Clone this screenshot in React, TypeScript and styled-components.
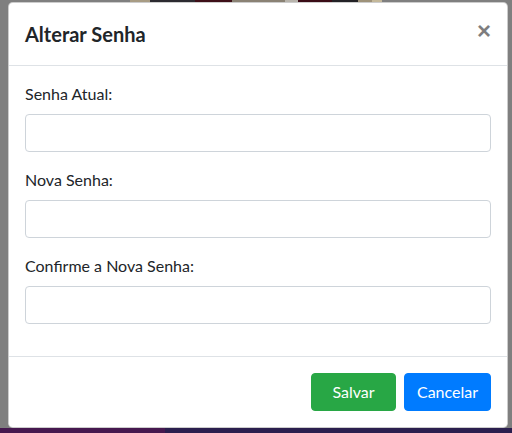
import styled, { createGlobalStyle } from "styled-components";

const GlobalStyle = createGlobalStyle`
  html, body {
    margin: 0;
    padding: 0;
    background: #7f7f7f;
  }
  * {
    box-sizing: border-box;
  }
  body {
    font-family: "Lato", "Noto Sans", "Liberation Sans", sans-serif;
    color: #212529;
  }
`;

const Backdrop = styled.div`
  width: 512px;
  height: 433px;
  display: flex;
  flex-direction: column;
  background: #7f7f7f;
  overflow: hidden;
`;

// fragment of the page picture showing above the modal
const TopStrip = styled.div`
  height: 2px;
  flex-shrink: 0;
  background: linear-gradient(
    to right,
    #7f7f7f 0 130px,
    #a89c84 130px 150px,
    #2c2a30 150px 195px,
    #3e0f18 195px 232px,
    #8a8274 232px 285px,
    #b8b4ac 285px 298px,
    #3a0c16 298px 332px,
    #232226 332px 358px,
    #9e927a 358px 372px,
    #c4b89a 372px 382px,
    #7f7f7f 382px
  );
`;

const BottomStrip = styled.div`
  flex: 1;
  background: linear-gradient(to right, #46184f 0 165px, #2a1e4e 165px);
`;

const Modal = styled.div`
  margin-left: 8px;
  width: 500px;
  flex-shrink: 0;
  background: #fff;
  border: 1px solid rgba(0, 0, 0, 0.2);
  border-radius: 4.8px;
  display: flex;
  flex-direction: column;
`;

const Header = styled.div`
  display: flex;
  align-items: flex-start;
  justify-content: space-between;
  padding: 16px;
  border-bottom: 1px solid #dee2e6;
`;

const Title = styled.h5`
  margin: 0;
  font-size: 20px;
  font-weight: 700;
  line-height: 1.5;
`;

const CloseButton = styled.button`
  padding: 16px;
  margin: -16px -16px -16px auto;
  background: transparent;
  border: 0;
  font-family: "Liberation Sans", sans-serif;
  font-size: 24px;
  font-weight: 700;
  line-height: 1;
  color: #000;
  opacity: 0.5;
  cursor: pointer;
`;

const Body = styled.div`
  padding: 16px;
`;

const FormGroup = styled.div`
  margin-bottom: 16px;
`;

const Label = styled.label`
  display: inline-block;
  margin-bottom: 8px;
  font-size: 16px;
  line-height: 1.5;
`;

const Input = styled.input`
  display: block;
  width: 100%;
  height: 38px;
  padding: 6px 12px;
  font-size: 16px;
  line-height: 1.5;
  color: #495057;
  background: #fff;
  border: 1px solid #ced4da;
  border-radius: 4px;
  outline: none;
`;

const Footer = styled.div`
  display: flex;
  justify-content: flex-end;
  align-items: center;
  gap: 8px;
  padding: 16px;
  border-top: 1px solid #dee2e6;
`;

const Button = styled.button<{ $bg: string; $width: number }>`
  width: ${(p) => p.$width}px;
  height: 38px;
  padding: 6px 0;
  font-family: inherit;
  font-size: 16px;
  line-height: 1.5;
  color: #fff;
  background: ${(p) => p.$bg};
  border: 1px solid ${(p) => p.$bg};
  border-radius: 4px;
  cursor: pointer;
`;

const fields = ["Senha Atual:", "Nova Senha:", "Confirme a Nova Senha:"];

export default function App() {
  return (
    <>
      <GlobalStyle />
      <Backdrop>
        <TopStrip />
        <Modal>
          <Header>
            <Title>Alterar Senha</Title>
            <CloseButton aria-label="Close">×</CloseButton>
          </Header>
          <Body>
            {fields.map((f) => (
              <FormGroup key={f}>
                <Label>{f}</Label>
                <Input type="password" />
              </FormGroup>
            ))}
          </Body>
          <Footer>
            <Button $bg="#28a745" $width={85}>
              Salvar
            </Button>
            <Button $bg="#007bff" $width={87}>
              Cancelar
            </Button>
          </Footer>
        </Modal>
        <BottomStrip />
      </Backdrop>
    </>
  );
}
